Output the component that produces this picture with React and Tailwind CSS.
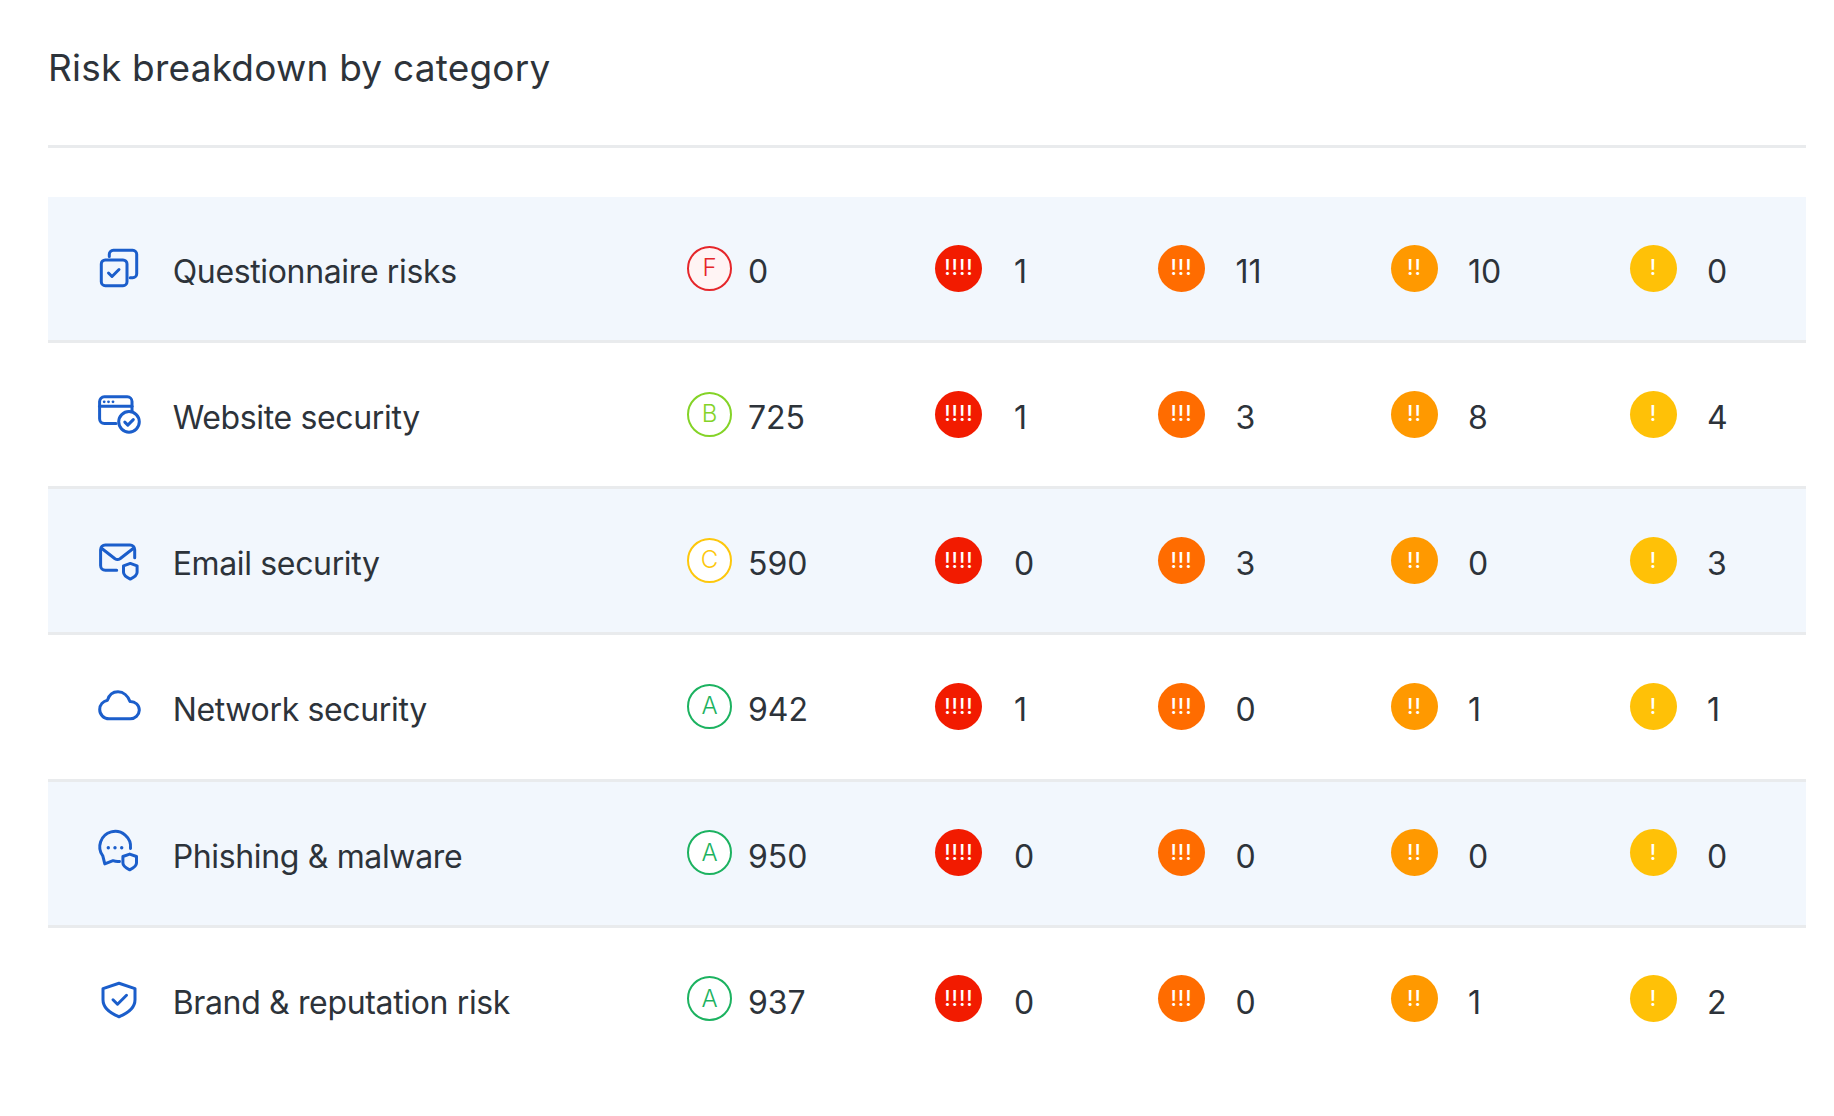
const svgProps = { viewBox: "0 0 42 42", fill: "none", strokeWidth: 3, strokeLinecap: "round", strokeLinejoin: "round", className: "w-[42px] h-[42px] stroke-[#1b5ecb] overflow-visible" };

const IconQ = () => (
  <svg {...svgProps}>
    <path d="M11.300 9.500V7.300a4 4 0 0 1 4-4h19.400a4 4 0 0 1 4 4v19.400a4 4 0 0 1-4 4h-2.500" />
    <rect x="3.300" y="13" width="25.700" height="25.700" rx="4" />
    <path d="M10.500 26l3.500 3.500 7-7" />
  </svg>
);
const Web = () => (
  <svg {...svgProps}>
    <g transform="translate(0,0.85)">
      <path d="M18 29.700H6.300a4.700 4.700 0 0 1-4.700-4.700V7.700a4.700 4.700 0 0 1 4.700-4.700H29.300a4.700 4.700 0 0 1 4.700 4.700v9.500" />
      <path d="M1.600 12.500H34" />
      <circle cx="31" cy="28" r="10.300" />
      <path d="M26.800 28.300l3 3 5.500-5.500" />
      <circle cx="6.200" cy="8" r="1.400" fill="#1b5ecb" stroke="none" />
      <circle cx="10.500" cy="8" r="1.400" fill="#1b5ecb" stroke="none" />
      <circle cx="15" cy="8" r="1.400" fill="#1b5ecb" stroke="none" />
    </g>
  </svg>
);
const IconE = () => (
  <svg {...svgProps}>
    <g transform="translate(0,2.700)">
      <path d="M18.700 28.500H7.300a4.700 4.700 0 0 1-4.700-4.700V8a4.700 4.700 0 0 1 4.700-4.700H32a4.700 4.700 0 0 1 4.700 4.700v8" />
      <path d="M3.500 6.500l13.500 10.500a4.500 4.500 0 0 0 5 0l13.500-10.500" />
      <path d="M32.300 21.700l6.800 2.400v6.500c0 3-3 5-6.800 6.800-3.800-1.800-6.800-3.800-6.800-6.800v-6.500z" />
    </g>
  </svg>
);
const IconC = () => (
  <svg {...svgProps}>
    <g transform="translate(0,-0.5)">
      <path d="M11 34.300H32a9 9 0 0 0 9.300-8.700 8.800 8.800 0 0 0-9.300-8.700C30 11.500 25.500 7.200 20 7.200 15 7.200 11 10.500 9.500 15.700 5 16.700 1.700 20.500 1.700 25a9.300 9.300 0 0 0 9.300 9.300z" />
    </g>
  </svg>
);
const IconP = () => (
  <svg {...svgProps}>
    <g transform="translate(0,-0.600)">
      <path d="M32.500 18A15.400 15.400 0 1 0 4.800 25.500L6.800 33.500 15 30.300A15.500 15.500 0 0 0 21.500 31" />
      <circle cx="10.300" cy="17.300" r="1.700" fill="#1b5ecb" stroke="none" />
      <circle cx="17" cy="17.300" r="1.700" fill="#1b5ecb" stroke="none" />
      <circle cx="23.700" cy="17.300" r="1.700" fill="#1b5ecb" stroke="none" />
      <path d="M31.700 23.700l6.800 2.400v6.500c0 3-3 5-6.800 6.800-3.800-1.800-6.800-3.800-6.800-6.800v-6.500z" />
    </g>
  </svg>
);
const IconB = () => (
  <svg {...svgProps}>
    <g transform="translate(0,0.25)">
      <path d="M21 5L37 10.300V21.500C37 29.500 31 34.500 21 38.500 11 34.500 5 29.500 5 21.500V10.300z" />
      <path d="M15 21.500l4.500 4.500 9-9" />
    </g>
  </svg>
);

const gradeStyles = {
  F: "border-[#e5262a] text-[#e5262a] bg-[#fff4f4]",
  B: "border-[#84d327] text-[#84d327] bg-white",
  C: "border-[#fdc70c] text-[#fdc70c] bg-white",
  A: "border-[#1cb260] text-[#1cb260] bg-white",
};

const rows = [
  { icon: IconQ, name: "Questionnaire risks", g: "F", score: "0", v: ["1", "11", "10", "0"] },
  { icon: Web, name: "Website security", g: "B", score: "725", v: ["1", "3", "8", "4"] },
  { icon: IconE, name: "Email security", g: "C", score: "590", v: ["0", "3", "0", "3"] },
  { icon: IconC, name: "Network security", g: "A", score: "942", v: ["1", "0", "1", "1"] },
  { icon: IconP, name: "Phishing & malware", g: "A", score: "950", v: ["0", "0", "0", "0"] },
  { icon: IconB, name: "Brand & reputation risk", g: "A", score: "937", v: ["0", "0", "1", "2"] },
];

const Sev = ({ bg, marks, value, cls, gap }) => (
  <div className={"flex items-center " + cls}>
    <div className={"w-[47px] h-[47px] rounded-full flex items-center justify-center shrink-0 -mt-[8px] text-white font-medium text-[21px] tracking-[1px] " + bg}>{marks}</div>
    <span className={gap}>{value}</span>
  </div>
);

export default function App() {
  return (
    <div className="w-[1834px] h-[1116px] bg-white overflow-hidden pl-[48px] text-[#2d333a] font-['Inter',sans-serif]">
      <div className="w-[1758px]">
        <div className="h-[148px] border-b-[3px] border-[#e9ebed] flex items-start">
          <h1 className="text-[37px] leading-[44px] mt-[46px] font-normal tracking-[0.22px]">Risk breakdown by category</h1>
        </div>
        <div className="mt-[49px]">
          {rows.map((r, i) => {
            const I = r.icon;
            return (
              <div key={r.name} className={"h-[146.15px] pt-[7px] flex items-center text-[32px] border-b-[3px] " + (i === 5 ? "border-transparent " : "border-[#e9ebed] ") + (i % 2 === 0 ? "bg-[#f2f7fd]" : "bg-white")}>
                <div className="w-[42px] ml-[50px] -mt-[8.4px] flex justify-center"><I /></div>
                <span className="ml-[32.7px] w-[514.3px] shrink-0 tracking-[-0.35px]">{r.name}</span>
                <div className="flex items-center w-[248.500px] shrink-0">
                  <div className={"w-[45px] h-[45px] rounded-full border-2 flex items-center justify-center text-[24px] font-light shrink-0 -mt-[8px] " + gradeStyles[r.g]}>{r.g}</div>
                  <span className="ml-[16px]">{r.score}</span>
                </div>
                <Sev bg="bg-[#f21b00]" marks="!!!!" value={r.v[0]} cls="w-[222.500px] shrink-0" gap="ml-[31.500px]" />
                <Sev bg="bg-[#ff6c00]" marks="!!!" value={r.v[1]} cls="w-[233px] shrink-0" gap="ml-[30.500px]" />
                <Sev bg="bg-[#ff9900]" marks="!!" value={r.v[2]} cls="w-[239px] shrink-0" gap="ml-[30px]" />
                <Sev bg="bg-[#ffc107]" marks="!" value={r.v[3]} cls="" gap="ml-[30px]" />
              </div>
            );
          })}
        </div>
      </div>
    </div>
  );
}
